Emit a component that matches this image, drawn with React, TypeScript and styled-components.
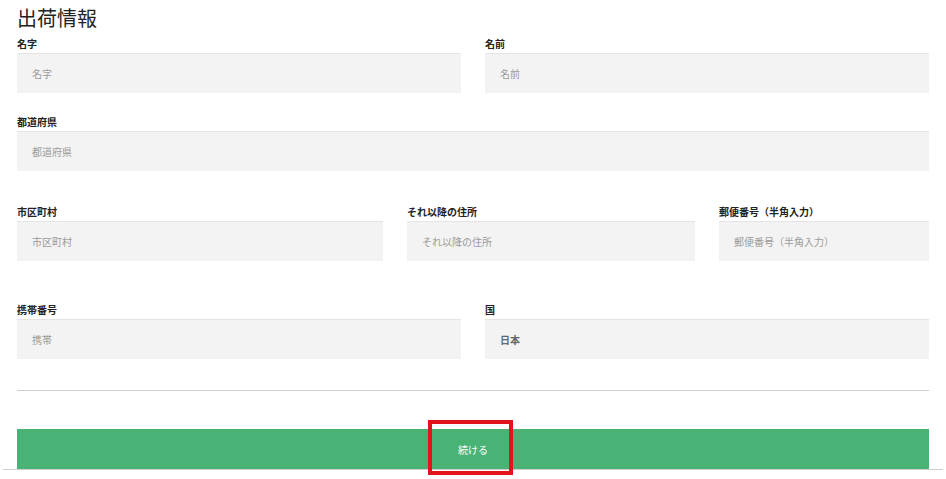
import React from "react";
import styled, { createGlobalStyle } from "styled-components";

const Global = createGlobalStyle`
  html, body { margin: 0; padding: 0; background: #fff; }
  body { font-family: "Noto Sans CJK JP", "Noto Sans", sans-serif; }
  * { box-sizing: border-box; }
`;

const Page = styled.div`
  width: 946px;
  padding: 6px 3px 10px;
`;

const Content = styled.div`
  padding: 0 14px;
`;

const Title = styled.h2`
  margin: 0 0 7px;
  font-size: 20px;
  line-height: 24px;
  font-weight: 400;
  color: #222;
`;

const Row = styled.div<{ $cols: string; $mt: number }>`
  display: grid;
  grid-template-columns: ${(p) => p.$cols};
  column-gap: 24px;
  margin-top: ${(p) => p.$mt}px;
`;

const Field = styled.div`
  display: flex;
  flex-direction: column;
`;

const Label = styled.label`
  font-size: 10px;
  line-height: 14px;
  font-weight: 700;
  color: #222;
  margin-bottom: 2px;
`;

const Input = styled.input<{ $value?: boolean }>`
  height: 40px;
  border: none;
  border-top: 1px solid #e4e4e4;
  background: #f3f3f3;
  padding: 0 15px;
  font-family: inherit;
  font-size: 10px;
  font-weight: ${(p) => (p.$value ? 700 : 400)};
  color: #666;
  outline: none;
  &::placeholder { color: #9a9a9a; }
`;

const Divider = styled.hr`
  margin: 31px 0 0;
  border: none;
  border-top: 1px solid #cfcfcf;
`;

const ButtonWrap = styled.div`
  position: relative;
  margin-top: 38px;
`;

const Button = styled.button`
  display: block;
  width: 100%;
  height: 40px;
  border: none;
  background: #48b375;
  color: #fff;
  font-family: inherit;
  font-size: 10px;
  padding: 0;
`;

const Highlight = styled.span`
  position: absolute;
  left: 411px;
  top: -9px;
  width: 85px;
  height: 55px;
  border: 4px solid #e3131b;
  pointer-events: none;
  z-index: 1;
`;

const BottomRule = styled.div`
  border-top: 1px solid #cfcfcf;
`;

type F = { label: string; placeholder?: string; value?: string };

const FieldBox = ({ label, placeholder, value }: F) => (
  <Field>
    <Label>{label}</Label>
    {value ? (
      <Input $value defaultValue={value} />
    ) : (
      <Input placeholder={placeholder ?? label} />
    )}
  </Field>
);

export default function App() {
  return (
    <Page>
      <Global />
      <Content>
        <Title>出荷情報</Title>
        <Row $cols="1fr 1fr" $mt={0}>
          <FieldBox label="名字" />
          <FieldBox label="名前" />
        </Row>
        <Row $cols="1fr" $mt={22}>
          <FieldBox label="都道府県" />
        </Row>
        <Row $cols="366px 288px 1fr" $mt={34}>
          <FieldBox label="市区町村" />
          <FieldBox label="それ以降の住所" />
          <FieldBox label="郵便番号（半角入力）" />
        </Row>
        <Row $cols="1fr 1fr" $mt={42}>
          <FieldBox label="携帯番号" placeholder="携帯" />
          <FieldBox label="国" value="日本" />
        </Row>
        <Divider />
        <ButtonWrap>
          <Button>続ける</Button>
          <Highlight />
        </ButtonWrap>
      </Content>
      <BottomRule />
    </Page>
  );
}
